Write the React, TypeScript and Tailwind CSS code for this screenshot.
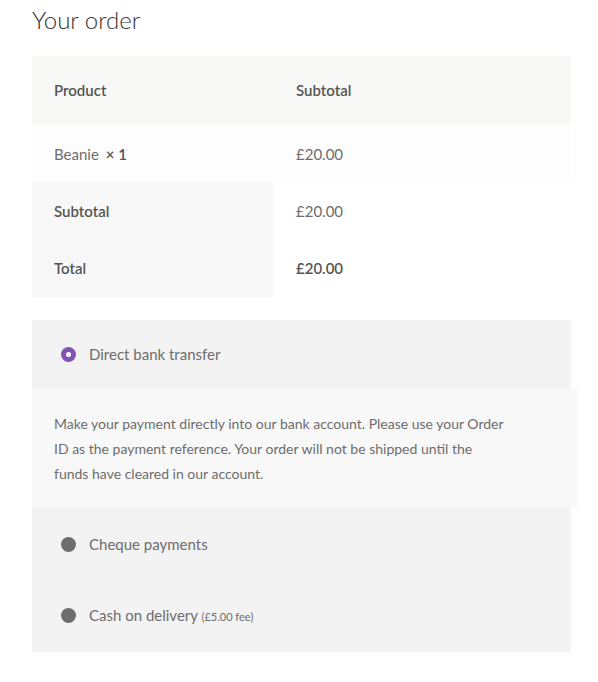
import React from "react";

const font = { fontFamily: '"Source Sans Pro", "Lato", "Noto Sans", sans-serif' };

function Radio({ checked }: { checked?: boolean }) {
    if (checked) {
        return (
            <span className="inline-flex items-center justify-center w-[15px] h-[15px] rounded-full bg-[#7f54b3] shrink-0">
                <span className="w-[5px] h-[5px] rounded-full bg-white" />
            </span>
        );
    }
    return <span className="inline-block w-[15px] h-[15px] rounded-full bg-[#6d6d6d] shrink-0" />;
}

export default function App() {
    return (
        <div className="w-[598px] h-[682px] bg-white text-[#6d6d6d] overflow-hidden" style={font}>
            <div className="pl-[32px] pr-[27px]">
                <h3 className="text-[24px] font-light text-[#333333] leading-none pt-[8px] pb-[24px]">Your order</h3>

                {/* order table */}
                <div className="w-[539px] text-[15px]">
                    <div className="flex h-[69px] items-center bg-[#f8f8f6] font-semibold text-[#555]">
                        <div className="w-[241px] pl-[22px]">Product</div>
                        <div className="pl-[23px]">Subtotal</div>
                    </div>
                    <div className="flex h-[58px] items-center bg-[#fdfdfd]">
                        <div className="w-[241px] pl-[22px]">
                            Beanie <strong className="font-semibold text-[#555] ml-[3px]">× 1</strong>
                        </div>
                        <div className="pl-[23px]">£20.00</div>
                    </div>
                    <div className="flex h-[57px]">
                        <div className="w-[241px] pl-[22px] flex items-center bg-[#f8f8f8] font-semibold text-[#555]">Subtotal</div>
                        <div className="pl-[23px] flex items-center">£20.00</div>
                    </div>
                    <div className="flex h-[57px]">
                        <div className="w-[241px] pl-[22px] flex items-center bg-[#f8f8f8] font-semibold text-[#555]">Total</div>
                        <div className="pl-[23px] flex items-center font-semibold text-[#555]">£20.00</div>
                    </div>
                </div>

                {/* payment methods */}
                <div className="mt-[23px] w-[539px] bg-[#f3f3f3] text-[15px] pb-[2px]">
                    <div className="h-[68px] flex items-center gap-[13px] pl-[29px]">
                        <Radio checked />
                        <span>Direct bank transfer</span>
                    </div>
                    <div className="bg-[#f8f8f8] pl-[22px] pt-[23px] pb-[22px] mr-[-6px]">
                        <p className="w-[452px] text-[14px] leading-[25px]">
                            Make your payment directly into our bank account. Please use your Order ID as the payment
                            reference. Your order will not be shipped until the funds have cleared in our account.
                        </p>
                    </div>
                    <div className="h-[72px] flex items-center gap-[13px] pl-[29px]">
                        <Radio />
                        <span>Cheque payments</span>
                    </div>
                    <div className="h-[70px] flex items-center gap-[13px] pl-[29px]">
                        <Radio />
                        <span>
                            Cash on delivery <small className="text-[11px]">(£5.00 fee)</small>
                        </span>
                    </div>
                </div>
            </div>
        </div>
    );
}
